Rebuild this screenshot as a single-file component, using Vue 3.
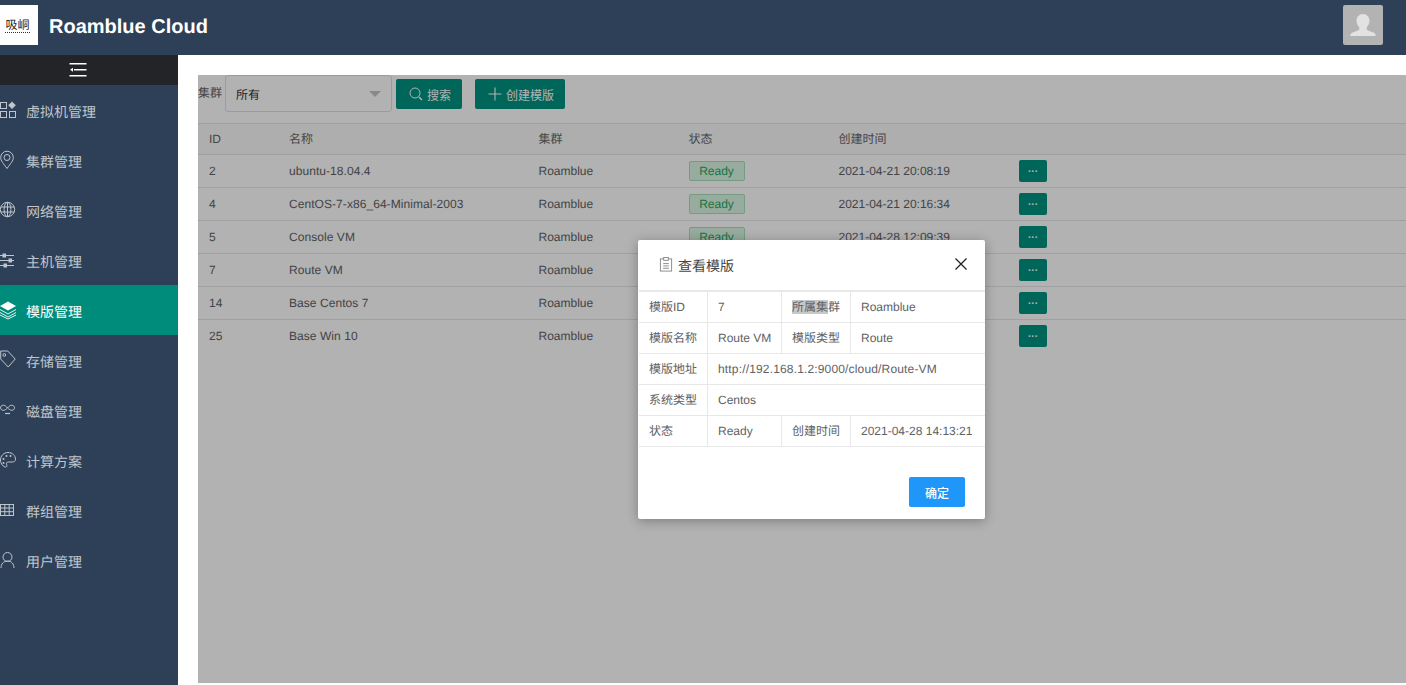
<script setup>
const menu = [
  { label: '虚拟机管理', icon: 'apps' },
  { label: '集群管理', icon: 'pin' },
  { label: '网络管理', icon: 'globe' },
  { label: '主机管理', icon: 'sliders' },
  { label: '模版管理', icon: 'layers', active: true },
  { label: '存储管理', icon: 'tag' },
  { label: '磁盘管理', icon: 'infinity' },
  { label: '计算方案', icon: 'palette' },
  { label: '群组管理', icon: 'table' },
  { label: '用户管理', icon: 'user' }
]
const rows = [
  { id: 2, name: 'ubuntu-18.04.4', time: '2021-04-21 20:08:19' },
  { id: 4, name: 'CentOS-7-x86_64-Minimal-2003', time: '2021-04-21 20:16:34' },
  { id: 5, name: 'Console VM', time: '2021-04-28 12:09:39' },
  { id: 7, name: 'Route VM', time: '2021-04-28 14:13:21' },
  { id: 14, name: 'Base Centos 7', time: '2021-04-29 09:21:47' },
  { id: 25, name: 'Base Win 10', time: '2021-05-06 16:02:11' }
]
</script>

<template>
  <div class="page">
    <header class="topbar">
      <div class="logo"><span>吸峒</span></div>
      <div class="brand">Roamblue Cloud</div>
      <div class="avatar">
        <svg viewBox="0 0 40 40" width="40" height="40">
          <path fill="#e2e2e2" d="M20 9c-4 0-6.500 3-6.500 6.800 0 2.800 1.300 5 2.800 6.400v2.300c-1.500 1.300-5 2-7.300 3.200-.9.500-1.800 1.800-1.800 3.300h25.600c0-1.500-.9-2.800-1.800-3.300-2.300-1.200-5.800-1.900-7.300-3.200v-2.300c1.500-1.400 2.800-3.600 2.800-6.400C26.500 12 24 9 20 9z"/>
        </svg>
      </div>
    </header>
    <div class="body">
      <aside class="sidebar">
        <div class="toggle">
          <svg viewBox="0 0 18 16" width="18" height="16" fill="#fff">
            <rect x="0.500" y="1" width="17" height="1.500"/>
            <rect x="5" y="7" width="12.500" height="1.500"/>
            <rect x="0.500" y="13" width="17" height="1.500"/>
            <path d="M1 7.700 4 5.700v4z"/>
          </svg>
        </div>
        <nav>
          <a v-for="m in menu" :key="m.label" class="item" :class="{ active: m.active }">
            <svg class="ico" viewBox="0 0 16 20" width="16" height="20" fill="none" stroke="currentColor" stroke-width="1">
              <template v-if="m.icon === 'apps'">
                <rect x="0.500" y="2.500" width="6" height="6"/>
                <rect x="0.500" y="11.500" width="6" height="6"/>
                <rect x="9.500" y="11.500" width="6" height="6"/>
                <path fill="currentColor" stroke="none" d="M12 1.500l3.800 3.800-3.800 3.800-3.800-3.800z"/>
              </template>
              <template v-else-if="m.icon === 'pin'">
                <path d="M7 18.500C3.500 13.500.7 11 .7 7.500a6.300 6.300 0 0 1 12.600 0C13.300 11 10.500 13.500 7 18.500z"/>
                <circle cx="7" cy="7.500" r="3"/>
              </template>
              <template v-else-if="m.icon === 'globe'">
                <circle cx="7.500" cy="9.500" r="7.200"/>
                <ellipse cx="7.500" cy="9.500" rx="3.400" ry="7.200"/>
                <path d="M7.500 2.300v14.400M1 7h13M1 12h13"/>
              </template>
              <template v-else-if="m.icon === 'sliders'">
                <path d="M0 5.500h14M0 10.500h14M0 15.500h14"/>
                <rect x="3" y="4" width="2.500" height="3" fill="currentColor"/>
                <rect x="9" y="9" width="2.500" height="3" fill="currentColor"/>
                <rect x="4" y="14" width="2.500" height="3" fill="currentColor"/>
              </template>
              <template v-else-if="m.icon === 'layers'">
                <path fill="currentColor" stroke="none" d="M8 1.500l8 4.500-8 4.500L0 6z"/>
                <path d="M0 9.500l8 4.500 8-4.500M0 12.500l8 4.500 8-4.500M0 15l8 4 8-4" stroke-width="0.900"/>
              </template>
              <template v-else-if="m.icon === 'tag'">
                <path d="M.7 1h7l7.500 8-7 8L.7 9z"/>
                <circle cx="4.300" cy="5" r="1.400"/>
              </template>
              <template v-else-if="m.icon === 'infinity'">
                <path d="M7.500 8C6 6 4.600 5.200 3.200 5.200 1.700 5.200.5 6.400.5 7.800s1.200 2.500 2.700 2.500c1.400 0 2.800-.8 4.300-2.300 1.500-1.800 2.900-2.800 4.300-2.800 1.500 0 2.700 1.200 2.700 2.600s-1.200 2.500-2.700 2.500c-1.400 0-2.800-1-4.300-2.500z"/>
                <path d="M5 13.500h5" stroke-width="1.200"/>
              </template>
              <template v-else-if="m.icon === 'palette'">
                <path d="M8 2.500C3.500 2.500.5 6 .5 10c0 4 3 7 5 7 1.500 0 1.700-1.300 1.200-2.300-.6-1.300 0-2.700 1.500-2.700h4.300c1.700 0 3-.9 3-2.800C15.500 5.700 12.500 2.500 8 2.500z"/>
                <g fill="currentColor" stroke="none">
                  <circle cx="3.500" cy="9" r="1"/><circle cx="6.500" cy="6" r="1"/><circle cx="10.500" cy="6" r="1"/><circle cx="3.500" cy="13" r="1"/>
                </g>
              </template>
              <template v-else-if="m.icon === 'table'">
                <rect x="0.500" y="4.500" width="13" height="11"/>
                <path d="M0 8h14M0 11.700h14M4.800 4.500v11M9.200 4.500v11"/>
              </template>
              <template v-else>
                <circle cx="7.500" cy="7" r="4.500"/>
                <path d="M1 18c0-4 2.500-7 6.500-7S14 14 14 18"/>
              </template>
            </svg>
            <span>{{ m.label }}</span>
          </a>
        </nav>
      </aside>
      <main class="main">
        <div class="panel">
          <div class="toolbar">
            <label class="field-label">集群</label>
            <div class="select"><span>所有</span><i class="caret"></i></div>
            <button class="btn search">
              <svg viewBox="0 0 14 14" width="14" height="14" fill="none" stroke="#fff" stroke-width="1"><circle cx="6" cy="6" r="5"/><path d="M10 10l3 3" stroke-width="1.500"/></svg>
              搜索
            </button>
            <button class="btn create">
              <svg viewBox="0 0 14 14" width="14" height="14" fill="none" stroke="#fff" stroke-width="1.100"><path d="M7 .5v13M.5 7h13"/></svg>
              创建模版
            </button>
          </div>
          <div class="thead row">
            <div>ID</div><div>名称</div><div>集群</div><div>状态</div><div>创建时间</div><div></div>
          </div>
          <div v-for="r in rows" :key="r.id" class="row tr">
            <div>{{ r.id }}</div>
            <div class="name">{{ r.name }}</div>
            <div>Roamblue</div>
            <div><span class="badge">Ready</span></div>
            <div>{{ r.time }}</div>
            <div><button class="more">···</button></div>
          </div>
          <div class="mask"></div>
          <section class="dialog">
            <div class="dlg-head">
              <div class="dlg-title">
                <svg viewBox="0 0 14 16" width="14" height="15" fill="none" stroke="#888" stroke-width="1"><rect x="1" y="2" width="12" height="13"/><rect x="4.500" y="0.500" width="5" height="3" fill="#fff"/><path d="M4 7h6M4 9.500h6M4 12h6"/></svg>
                <span>查看模版</span>
              </div>
              <svg class="close" viewBox="0 0 14 14" width="14" height="14" fill="none" stroke="#222" stroke-width="1.300"><path d="M1.500 1.500l11 11M12.500 1.500l-11 11"/></svg>
            </div>
            <div class="grid">
              <div class="c">模版ID</div><div class="c">7</div><div class="c"><span class="sel">所属集</span>群</div><div class="c">Roamblue</div>
              <div class="c">模版名称</div><div class="c">Route VM</div><div class="c">模版类型</div><div class="c">Route</div>
              <div class="c">模版地址</div><div class="c wide url">http://192.168.1.2:9000/cloud/Route-VM</div>
              <div class="c">系统类型</div><div class="c wide">Centos</div>
              <div class="c">状态</div><div class="c">Ready</div><div class="c">创建时间</div><div class="c">2021-04-28 14:13:21</div>
            </div>
            <div class="dlg-foot"><button class="ok">确定</button></div>
          </section>
        </div>
      </main>
    </div>
  </div>
</template>

<style>
html, body { margin: 0; background: #fff; }
</style>

<style scoped>
.page {
  width: 1406px;
  height: 685px;
  overflow: hidden;
  display: flex;
  flex-direction: column;
  font-family: "Liberation Sans", "Noto Sans CJK SC", sans-serif;
  font-size: 12px;
  color: #606266;
  text-rendering: geometricPrecision;
}
.topbar {
  height: 55px;
  flex: none;
  background: #2e4057;
  display: flex;
  align-items: flex-start;
}
.logo {
  width: 38px;
  height: 40px;
  margin-top: 5px;
  background: #fff;
  display: flex;
  align-items: center;
  justify-content: center;
  box-sizing: border-box;
  padding-right: 3px;
  overflow: hidden;
}
.logo span {
  font-size: 12px;
  line-height: 14px;
  color: #222;
  white-space: nowrap;
  border-bottom: 1px dotted #333;
}
.brand {
  margin: 14px 0 0 11px;
  color: #fff;
  font-size: 20px;
  font-weight: 700;
  line-height: 26px;
}
.avatar {
  margin: 5px 23px 0 auto;
  width: 40px;
  height: 40px;
  background: #b3b3b3;
  border-radius: 2px;
}
.avatar svg { display: block; }
.body { flex: 1; display: flex; min-height: 0; }
.sidebar { width: 178px; flex: none; background: #2e4057; }
.toggle {
  height: 30px;
  background: #222428;
  display: flex;
  align-items: center;
  justify-content: center;
  padding-right: 22px;
  box-sizing: border-box;
}
.item {
  height: 50px;
  display: flex;
  align-items: center;
  padding-top: 3px;
  box-sizing: border-box;
  color: #bfc5cc;
  font-size: 14px;
}
.item .ico { margin-right: 10px; flex: none; position: relative; top: -2px; }
.item.active { background: #008c7a; color: #fff; }
.main { flex: 1; padding: 20px 0 2px 20px; min-width: 0; display: flex; }
.panel { flex: 1; position: relative; background: #fff; }
.toolbar {
  height: 48px;
  box-sizing: border-box;
  display: flex;
  align-items: flex-start;
}
.field-label { width: 27px; flex: none; font-size: 12px; line-height: 36px; color: #606266; }
.select {
  width: 167px;
  height: 37px;
  box-sizing: border-box;
  border: 1px solid #dcdfe6;
  border-radius: 3px;
  display: flex;
  align-items: center;
  justify-content: space-between;
  padding: 1px 10px 0;
  color: #333;
  font-size: 12px;
}
.caret { width: 0; height: 0; border: 6px solid transparent; border-top: 6px solid #c0c4cc; border-bottom: 0; }
.btn {
  height: 30px;
  margin-top: 4px;
  border: 0;
  border-radius: 2px;
  background: #009281;
  color: #fff;
  font: inherit;
  display: flex;
  align-items: center;
  justify-content: center;
  gap: 4px;
  padding: 0 0 0 2px;
}
.search { width: 66px; margin-left: 4px; }
.create { width: 90px; margin-left: 13px; }
.row {
  display: grid;
  grid-template-columns: 80px 249.500px 150px 150px 180.500px 1fr;
  align-items: center;
  padding-left: 11px;
  border-top: 1px solid #e3e5e8;
  box-sizing: border-box;
}
.thead { height: 31px; padding-bottom: 1px; background: #fafafa; color: #666; }
.tr { height: 33px; color: #606266; }
.tr:last-of-type { border-bottom: 1px solid #e3e5e8; height: 34px; }
.name { letter-spacing: 0.060px; }
.badge {
  display: inline-block;
  width: 56px;
  height: 20px;
  box-sizing: border-box;
  line-height: 18px;
  text-align: center;
  background: #d8f5e2;
  border: 1px solid #a8e0bc;
  color: #25a85e;
  border-radius: 2px;
}
.more {
  display: block;
  width: 28px;
  height: 22px;
  border: 0;
  border-radius: 2px;
  background: #009281;
  color: #fff;
  font: inherit;
  font-size: 10px;
  font-weight: 700;
  padding: 0;
}
.mask { position: absolute; inset: 0; background: rgba(0, 0, 0, 0.3); }
.dialog {
  position: absolute;
  left: 440px;
  top: 165px;
  width: 347px;
  height: 279px;
  background: #fff;
  border-radius: 2px;
  box-shadow: 0 2px 12px rgba(0, 0, 0, 0.3);
  display: flex;
  flex-direction: column;
}
.dlg-head {
  height: 50px;
  flex: none;
  box-sizing: border-box;
  display: flex;
  align-items: center;
  justify-content: space-between;
  padding: 0 17px 2px 21px;
}
.dlg-title { display: flex; align-items: center; gap: 5px; font-size: 14px; color: #444; margin-top: 4px; }
.dlg-title svg { margin-top: -3px; }
.grid {
  display: grid;
  grid-template-columns: 69px 74px 69px 1fr;
  grid-auto-rows: 31px;
  margin: 0 0 0 1px;
  border-top: 1px solid #e8e8e8;
  border-bottom: 1px solid #e8e8e8;
  background: #fff;
}
.c {
  padding-left: 10px;
  line-height: 31px;
  white-space: nowrap;
  box-sizing: border-box;
  border-right: 1px solid #e8e8e8;
  border-top: 1px solid #e8e8e8;
  color: #606266;
}
.c:nth-child(4n) { border-right: 0; }
.wide { grid-column: span 3; border-right: 0; }
.url { letter-spacing: 0.160px; }
.sel { background: #c8c8c8; }
.dlg-foot { flex: 1; display: flex; justify-content: flex-end; align-items: flex-end; padding: 0 20px 12px; }
.ok {
  width: 56px;
  height: 30px;
  border: 0;
  border-radius: 2px;
  background: #1e96fa;
  color: #fff;
  font: inherit;
  font-weight: 500;
  padding: 0;
}
</style>
